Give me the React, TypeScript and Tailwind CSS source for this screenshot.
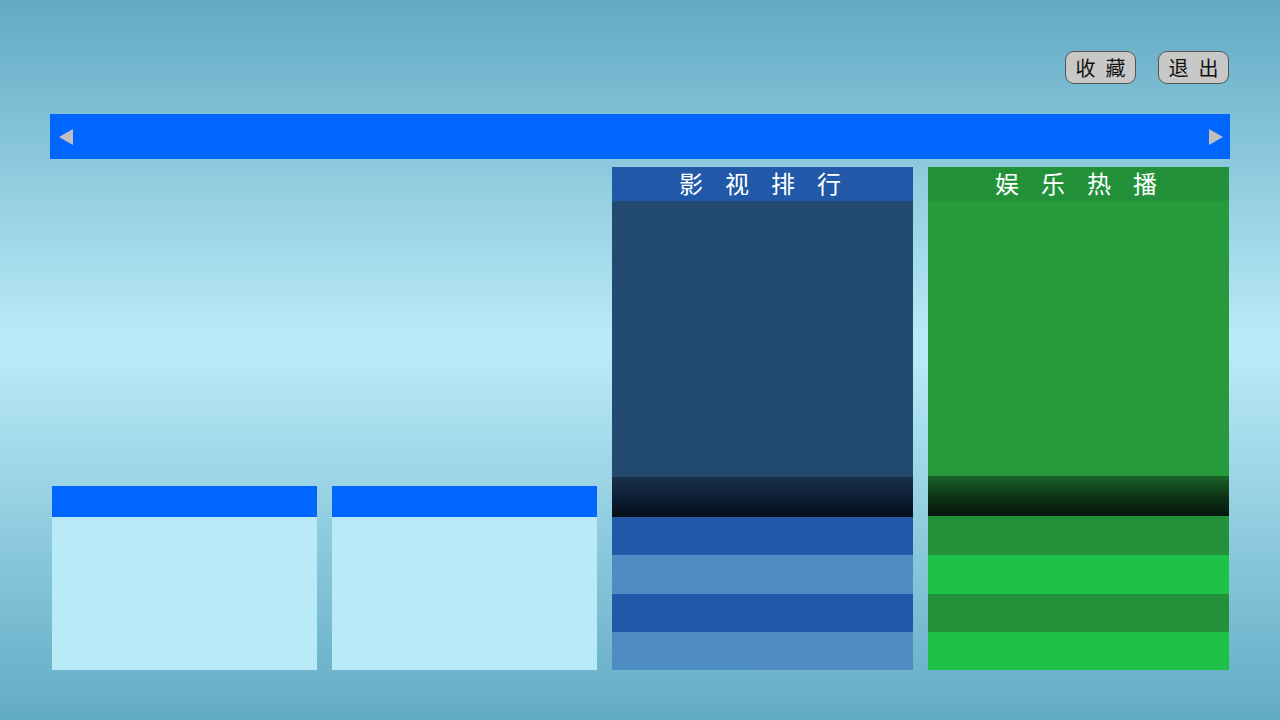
import React from "react";

const cjk = { fontFamily: '"Noto Sans CJK SC", "Noto Sans", sans-serif' };

function Btn({ a, b }: { a: string; b: string }) {
  return (
    <button className="w-[71px] h-[33px] rounded-[9px] border border-[#555] bg-[#c8c8c8] text-[20px] leading-none text-[#111] flex items-center justify-center gap-[10px] whitespace-nowrap p-0">
      <span>{a}</span>
      <span>{b}</span>
    </button>
  );
}

export default function App() {
  return (
    <div
      className="w-[1280px] h-[720px] overflow-hidden bg-[linear-gradient(to_bottom,#62aac3_0%,#b8e9f7_46%,#b8e9f7_50%,#62abc4_100%)]"
      style={cjk}
    >
      <div className="flex justify-end gap-[22px] pt-[51px] pr-[51px]">
        <Btn a="收" b="藏" />
        <Btn a="退" b="出" />
      </div>

      <div className="ml-[50px] mt-[30px] w-[1180px] h-[45px] bg-[#0066ff] flex items-center justify-between px-[9px]">
        <svg width="14" height="16" viewBox="0 0 14 16">
          <polygon points="14,0 14,16 0,8" fill="#c0c0c0" />
        </svg>
        <svg width="14" height="16" viewBox="0 0 14 16" className="mr-[-2px]">
          <polygon points="0,0 0,16 14,8" fill="#c0c0c0" />
        </svg>
      </div>

      <div className="ml-[52px] mt-[8px] flex gap-[15px] w-[1177px] h-[503px]">
        <div className="flex items-end gap-[15px]">
          {[0, 1].map((i) => (
            <div key={i} className="w-[265px] h-[184px] flex flex-col">
              <div className="h-[31px] bg-[#0066ff]" />
              <div className="flex-1 bg-[#b8eaf8]" />
            </div>
          ))}
        </div>

        <div className="w-[301px] flex flex-col">
          <div className="h-[34px] bg-[#2158a8] text-white text-[24px] leading-[32px] text-center tracking-[22px] pl-[17px] whitespace-nowrap">
            影视排行
          </div>
          <div className="h-[276px] bg-[#234b70]" />
          <div className="h-[40px] bg-[linear-gradient(to_bottom,#18304a,#0d1d33_55%,#060d18)]" />
          <div className="h-[38px] bg-[#2159a8]" />
          <div className="h-[39px] bg-[#4f8cc4]" />
          <div className="h-[38px] bg-[#2159a8]" />
          <div className="h-[38px] bg-[#4f8cc4]" />
        </div>

        <div className="w-[301px] flex flex-col">
          <div className="h-[34px] bg-[#22913a] text-white text-[24px] leading-[32px] text-center tracking-[22px] pl-[17px] whitespace-nowrap">
            娱乐热播
          </div>
          <div className="h-[275px] bg-[#279b3b]" />
          <div className="h-[40px] bg-[linear-gradient(to_bottom,#1b6429,#0d3516_50%,#06160b)]" />
          <div className="h-[39px] bg-[#22913a]" />
          <div className="h-[39px] bg-[#1fc248]" />
          <div className="h-[38px] bg-[#22913a]" />
          <div className="h-[38px] bg-[#1fc248]" />
        </div>
      </div>
    </div>
  );
}
